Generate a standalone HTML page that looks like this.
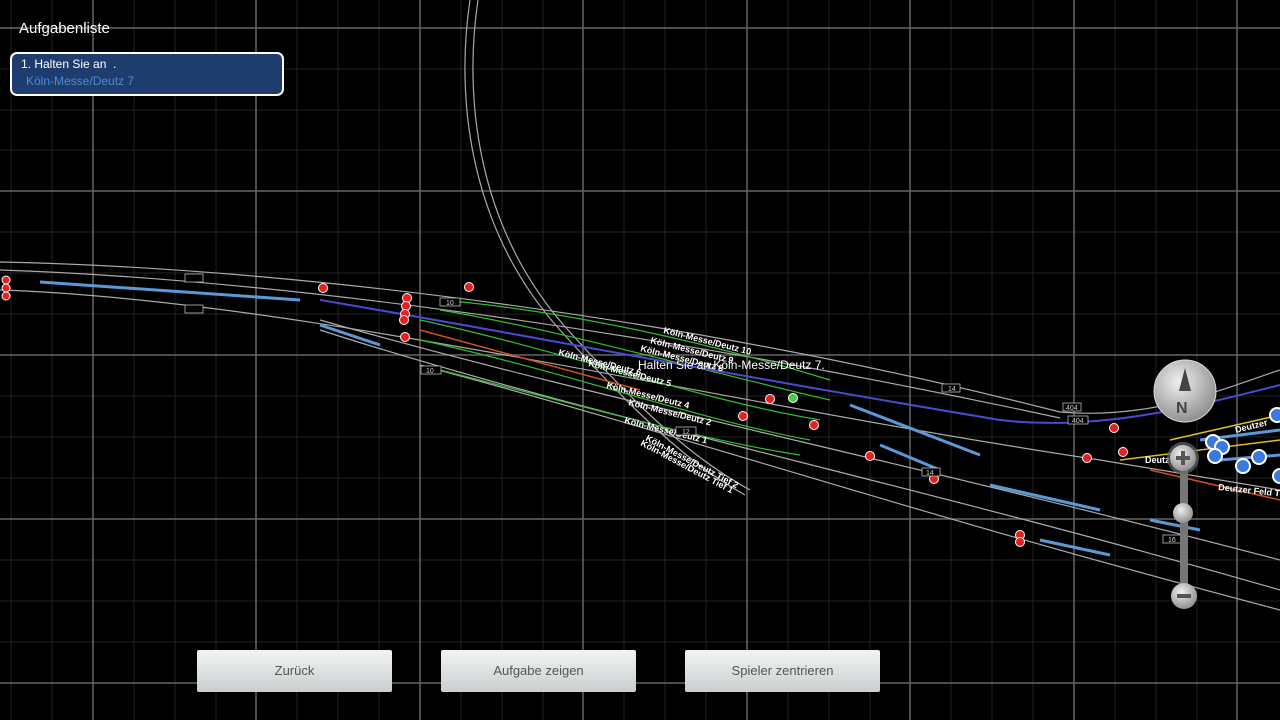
<!DOCTYPE html>
<html><head><meta charset="utf-8"><style>
html,body{margin:0;padding:0;background:#000;width:1280px;height:720px;overflow:hidden;font-family:"Liberation Sans",sans-serif}
svg{position:absolute;left:0;top:0}
.title{position:absolute;left:19px;top:20px;color:#fff;font-size:15px}
.task{position:absolute;left:10px;top:52px;width:274px;height:44px;background:#1e3d6e;border:2px solid #fff;border-radius:7px;box-sizing:border-box}
.task .a{position:absolute;left:9px;top:3px;color:#fff;font-size:12px}
.task .b{position:absolute;left:14px;top:20px;color:#4a8ad8;font-size:12px}
.btn{position:absolute;top:650px;width:195px;height:42px;background:linear-gradient(#f2f4f4,#c9cecf);border-radius:2px;color:#555;font-size:13px;text-align:center;line-height:42px;font-family:"Liberation Sans Narrow","Liberation Sans",sans-serif}
</style></head><body>
<svg width="1280" height="720">
<g stroke="#222" stroke-width="1">
<path d="M134 0V720M175 0V720M216 0V720M297 0V720M338 0V720M379 0V720M461 0V720M502 0V720M543 0V720M624 0V720M665 0V720M706 0V720M788 0V720M829 0V720M870 0V720M951 0V720M992 0V720M1033 0V720M1115 0V720M1156 0V720M1197 0V720M52 0V720M11 0V720"/>
<path d="M0 69H1280M0 110H1280M0 150H1280M0 232H1280M0 273H1280M0 314H1280M0 396H1280M0 437H1280M0 478H1280M0 560H1280M0 601H1280M0 642H1280"/>
</g>
<g stroke="#666" stroke-width="1.5">
<path d="M93 0V720M256 0V720M420 0V720M583 0V720M747 0V720M910 0V720M1074 0V720M1237 0V720"/>
<path d="M0 28H1280M0 191H1280M0 355H1280M0 519H1280M0 683H1280"/>
</g>
<g fill="none" stroke="#aaa" stroke-width="1.2">
<path d="M470 0C455 100 470 230 560 330S700 470 745 495"/>
<path d="M478 0C463 100 478 230 568 330S705 465 750 490"/>
<path d="M0 262C300 268 700 320 1060 412C1150 420 1220 390 1280 370"/>
<path d="M0 270C300 280 700 340 1060 418"/>
<path d="M320 320C600 400 900 460 1280 560"/>
<path d="M320 330C600 420 900 480 1280 590"/>
<path d="M420 365C700 440 900 510 1280 610"/>
<path d="M0 290C300 300 700 400 1100 460L1280 490"/>
</g>
<g fill="none" stroke="#2fbf2f" stroke-width="1.2">
<path d="M440 300C560 310 700 340 830 380"/>
<path d="M440 310C560 330 700 370 830 400"/>
<path d="M420 320C560 350 700 400 820 420"/>
<path d="M420 340C560 370 700 420 810 440"/>
<path d="M440 370C560 400 700 440 800 455"/>
</g>
<path d="M320 300C500 330 700 370 1000 420C1100 432 1200 405 1280 385" stroke="#4a4ad0" stroke-width="2" fill="none"/>
<path d="M420 330L640 390" stroke="#d05020" stroke-width="1.5"/>
<path d="M1150 470L1280 500" stroke="#d05020" stroke-width="1.5"/>
<path d="M1120 460L1280 440M1170 440L1280 415" stroke="#d8c020" stroke-width="1.5"/>
<g stroke="#5a9ad8" stroke-width="3">
<path d="M40 282L300 300M320 325L380 345M850 405L980 455M880 445L940 470M990 485L1100 510M1040 540L1110 555M1150 520L1200 530M1200 440L1280 430M1220 460L1280 455"/>
</g>
<g fill="#e52020" stroke="#fff" stroke-width="1">
<circle cx="6" cy="280" r="4"/><circle cx="6" cy="288" r="4"/><circle cx="6" cy="296" r="4"/>
<circle cx="323" cy="288" r="4.5"/><circle cx="407" cy="298" r="4.5"/><circle cx="406" cy="306" r="4.5"/><circle cx="405" cy="314" r="4.5"/><circle cx="404" cy="320" r="4.5"/><circle cx="405" cy="337" r="4.5"/><circle cx="469" cy="287" r="4.5"/><circle cx="770" cy="399" r="4.5"/><circle cx="743" cy="416" r="4.5"/><circle cx="814" cy="425" r="4.5"/><circle cx="870" cy="456" r="4.5"/><circle cx="934" cy="479" r="4.5"/><circle cx="1020" cy="535" r="4.5"/><circle cx="1020" cy="542" r="4.5"/><circle cx="1087" cy="458" r="4.5"/><circle cx="1114" cy="428" r="4.5"/><circle cx="1123" cy="452" r="4.5"/>
</g>
<circle cx="793" cy="398" r="4.5" fill="#40d040" stroke="#fff"/>
<g fill="#3a7ae0" stroke="#fff" stroke-width="2">
<circle cx="1213" cy="442" r="7"/><circle cx="1222" cy="447" r="7"/><circle cx="1215" cy="456" r="7"/><circle cx="1259" cy="457" r="7"/><circle cx="1243" cy="466" r="7"/><circle cx="1277" cy="415" r="7"/><circle cx="1280" cy="476" r="7"/>
</g>
<g fill="#fff" font-size="9" font-family="Liberation Sans" font-weight="bold">
<text x="663" y="333" transform="rotate(14 663 333)">Köln-Messe/Deutz 10</text>
<text x="650" y="343" transform="rotate(14 650 343)">Köln-Messe/Deutz 9</text>
<text x="640" y="351" transform="rotate(14 640 351)">Köln-Messe/Deutz 8</text>
<text x="558" y="355" transform="rotate(14 558 355)">Köln-Messe/Deutz 6</text>
<text x="588" y="366" transform="rotate(14 588 366)">Köln-Messe/Deutz 5</text>
<text x="606" y="388" transform="rotate(14 606 388)">Köln-Messe/Deutz 4</text>
<text x="628" y="405" transform="rotate(14 628 405)">Köln-Messe/Deutz 2</text>
<text x="624" y="423" transform="rotate(14 624 423)">Köln-Messe/Deutz 1</text>
<text x="645" y="440" transform="rotate(28 645 440)">Köln-Messe/Deutz Tief 2</text>
<text x="640" y="445" transform="rotate(28 640 445)">Köln-Messe/Deutz Tief 1</text>
<text x="1145" y="463">Deutz</text>
<text x="1218" y="490" transform="rotate(6 1218 490)">Deutzer Feld T</text>
<text x="1236" y="433" transform="rotate(-14 1236 433)">Deutzer</text>
</g>
<text x="638" y="369" fill="#fff" font-size="12">Halten Sie an  Köln-Messe/Deutz 7.</text>
<g fill="#000" stroke="#bbb" stroke-width="0.8" font-size="7" font-family="Liberation Sans">
<rect x="440" y="298" width="20" height="8"/><rect x="421" y="366" width="20" height="8"/><rect x="942" y="384" width="18" height="8"/><rect x="1063" y="403" width="18" height="8"/><rect x="1068" y="416" width="20" height="8"/><rect x="922" y="468" width="18" height="8"/><rect x="1163" y="535" width="18" height="8"/><rect x="676" y="427" width="20" height="8"/><rect x="185" y="274" width="18" height="8"/><rect x="185" y="305" width="18" height="8"/>
</g>
<g fill="#ccc" font-size="7"><text x="446" y="305">10</text><text x="426" y="373">10</text><text x="948" y="391">14</text><text x="1066" y="410">404</text><text x="1072" y="423">404</text><text x="926" y="475">14</text><text x="1168" y="542">16</text><text x="682" y="434">12</text></g>
<defs><radialGradient id="g" cx="0.4" cy="0.35" r="0.7"><stop offset="0" stop-color="#f0f0f0"/><stop offset="1" stop-color="#8a8a8a"/></radialGradient></defs>
<rect x="1180" y="460" width="8" height="140" fill="#777"/>
<circle cx="1185" cy="391" r="31" fill="url(#g)" stroke="#ddd"/>
<path d="M1185 368L1179 391H1191Z" fill="#444"/>
<text x="1176" y="413" font-size="16" fill="#444" font-weight="bold">N</text>
<circle cx="1183" cy="458" r="16" fill="#666" opacity="0.7"/>
<circle cx="1183" cy="458" r="13" fill="url(#g)"/>
<path d="M1176 458H1190M1183 451V465" stroke="#555" stroke-width="4"/>
<circle cx="1183" cy="513" r="10" fill="url(#g)"/>
<circle cx="1184" cy="596" r="13" fill="url(#g)"/>
<path d="M1177 596H1191" stroke="#555" stroke-width="4"/>
</svg>
<div class="title">Aufgabenliste</div>
<div class="task"><div class="a">1. Halten Sie an &nbsp;.</div><div class="b">Köln-Messe/Deutz 7</div></div>
<div class="btn" style="left:197px">Zurück</div>
<div class="btn" style="left:441px">Aufgabe zeigen</div>
<div class="btn" style="left:685px">Spieler zentrieren</div>
</body></html>
